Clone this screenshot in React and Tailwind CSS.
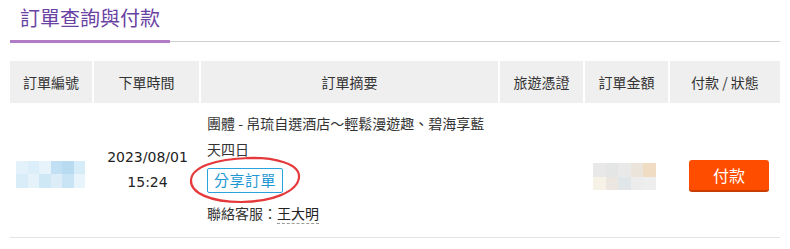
export default function App() {
  const idBlocks = [
    ['#e3f1fa', '#dbeef9', '#e6f3fb', '#c2e0f3', '#b9dbf1', '#d6ecf8'],
    ['#d9edf8', '#e5f2fa', '#cfe8f6', '#dcedf8', '#c8e4f5', '#e8f4fb'],
  ]
  const amountBlocks = [
    ['#e8e8e8', '#e4e6e6', '#e9e9e9', '#ebe4da', '#efdcc2'],
    ['#f6f3e6', '#ece6e0', '#e1e6e8', '#ececec', '#eeeeee'],
  ]

  return (
    <div
      className="w-[790px] h-[249px] bg-white text-[#333]"
      style={{ fontFamily: '"DejaVu Sans", "Noto Sans CJK TC", sans-serif' }}
    >
      <div className="mx-[10px]">
        {/* Title */}
        <div className="border-b border-[#cfcfcf]">
          <div className="w-[160px] mb-[-2px] border-b-[3px] border-[#b07cc6] pt-[4px] pb-[7px] pl-[10px]">
            <span
              className="text-[20px] leading-[28px] text-[#6a42a3] whitespace-nowrap"
              style={{ fontFamily: '"Noto Sans CJK TC", sans-serif' }}
            >
              訂單查詢與付款
            </span>
          </div>
        </div>

        {/* Table */}
        <div className="mt-[19px]">
          <div
            className="grid grid-cols-[84px_107px_299px_85px_85px_110px] h-[42px] text-[14px] text-[#333]"
            style={{ fontFamily: '"Noto Sans CJK TC", sans-serif' }}
          >
            {['訂單編號', '下單時間', '訂單摘要', '旅遊憑證', '訂單金額', '付款 / 狀態'].map((h, i) => (
              <div
                key={h}
                className={`flex items-center justify-center bg-[#efefef] ${i < 5 ? 'border-r-2 border-white' : ''}`}
              >
                {h}
              </div>
            ))}
          </div>

          <div className="grid grid-cols-[84px_107px_299px_85px_85px_110px] border-b border-[#e3e3e3]">
            {/* ID */}
            <div className="flex items-center pl-[6px]">
              <div className="mt-[8px] flex flex-col w-[69px] h-[27px] blur-[0.6px]">
                {idBlocks.map((row, r) => (
                  <div key={r} className="flex flex-1">
                    {row.map((c, k) => (
                      <div key={k} className="flex-1" style={{ backgroundColor: c }} />
                    ))}
                  </div>
                ))}
              </div>
            </div>

            {/* Date */}
            <div className="flex flex-col items-center justify-center text-[14px] leading-[25px] text-[#222]">
              <div>2023/08/01</div>
              <div>15:24</div>
            </div>

            {/* Summary */}
            <div
              className="relative px-[6px] pt-[7px] pb-[11px] text-[14px] leading-[26px] text-[#333]"
              style={{ fontFamily: '"Noto Sans CJK TC", "DejaVu Sans", sans-serif' }}
            >
              <div>團體 - 帛琉自選酒店～輕鬆漫遊趣、碧海享藍天四日</div>
              <div className="mt-[5px]">
                <span className="inline-flex items-center h-[25px] px-[6px] border border-[#2aa3dd] rounded-[2px] text-[15px] text-[#1d97d4] tracking-[0.5px]">
                  分享訂單
                </span>
              </div>
              <div className="mt-[7px]">
                聯絡客服：<span className="border-b border-dashed border-[#9a9a9a] text-[#222]">王大明</span>
              </div>
              <svg
                className="absolute left-[-14px] top-[52px] pointer-events-none"
                width="116"
                height="50"
                viewBox="0 0 116 50"
              >
                <path
                  d="M 60 3 C 88 2, 113 9, 112 22 C 111 37, 84 47, 54 47 C 24 47, 3 38, 4 25 C 5 12, 28 4, 62 3 C 70 3, 76 3, 82 4"
                  fill="none"
                  stroke="#e5393b"
                  strokeWidth="2.2"
                  strokeLinecap="round"
                />
              </svg>
            </div>

            {/* Voucher */}
            <div />

            {/* Amount */}
            <div className="flex items-center pl-[8px]">
              <div className="mt-[13px] flex flex-col w-[63px] h-[27px] blur-[0.6px]">
                {amountBlocks.map((row, r) => (
                  <div key={r} className="flex flex-1">
                    {row.map((c, k) => (
                      <div key={k} className="flex-1" style={{ backgroundColor: c }} />
                    ))}
                  </div>
                ))}
              </div>
            </div>

            {/* Pay */}
            <div className="flex items-center pl-[19px]">
              <button
                className="mt-[12px] w-[80px] h-[32px] bg-[#ff4d00] border-b-2 border-[#c93d00] rounded-[3px] text-white text-[16px] flex items-center justify-center"
                style={{ fontFamily: '"Noto Sans CJK TC", sans-serif' }}
              >
                付款
              </button>
            </div>
          </div>
        </div>
      </div>
    </div>
  )
}
